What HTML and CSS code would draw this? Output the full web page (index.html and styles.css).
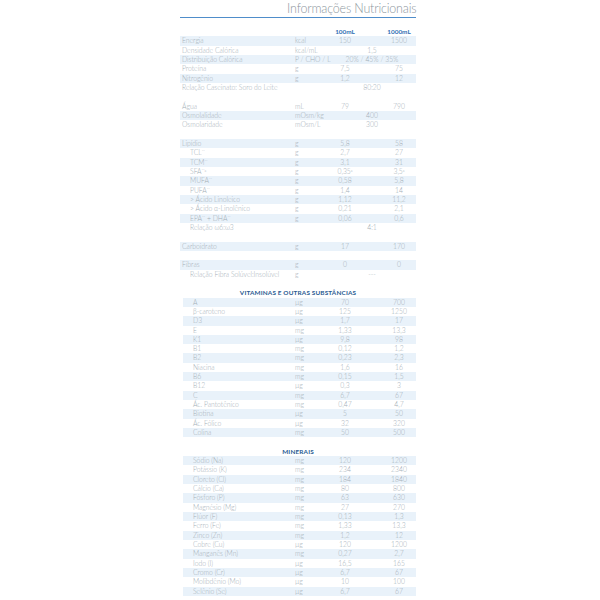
FILE: index.html
```html
<!DOCTYPE html>
<html lang="pt">
<head>
<meta charset="utf-8">
<title>Informações Nutricionais</title>
<link rel="stylesheet" href="styles.css">
</head>
<body>
<div class="page">
  <div class="title-wrap"><h1 class="title">Informações Nutricionais</h1></div>
  <div class="rule"></div>
  <div class="tbl">
    <div class="row head"><span></span><span></span><span class="v1">100mL</span><span class="v2">1000mL</span></div>

    <div class="row s"><span class="lb">Energia</span><span class="u">kcal</span><span class="v1">150</span><span class="v2">1500</span></div>
    <div class="row"><span class="lb">Densidade Calórica</span><span class="u">kcal/mL</span><span class="m">1,5</span></div>
    <div class="row s"><span class="lb">Distribuição Calórica</span><span class="u">P / CHO / L</span><span class="m">20% / 45% / 35%</span></div>
    <div class="row"><span class="lb">Proteína</span><span class="u">g</span><span class="v1">7,5</span><span class="v2">75</span></div>
    <div class="row s"><span class="lb">Nitrogênio</span><span class="u">g</span><span class="v1">1,2</span><span class="v2">12</span></div>
    <div class="row"><span class="lb">Relação Caseinato: Soro do Leite</span><span class="u"></span><span class="m">80:20</span></div>
    <div class="row"></div>
    <div class="row"><span class="lb">Água</span><span class="u">mL</span><span class="v1">79</span><span class="v2">790</span></div>
    <div class="row s"><span class="lb">Osmolalidade</span><span class="u">mOsm/kg</span><span class="m">400</span></div>
    <div class="row"><span class="lb">Osmolaridade</span><span class="u">mOsm/L</span><span class="m">300</span></div>
    <div class="row"></div>
    <div class="row s"><span class="lb">Lipídio</span><span class="u">g</span><span class="v1">5,8</span><span class="v2">58</span></div>
    <div class="row"><span class="lb sub">TCL<sup>**</sup></span><span class="u">g</span><span class="v1">2,7</span><span class="v2">27</span></div>
    <div class="row s"><span class="lb sub">TCM<sup>**</sup></span><span class="u">g</span><span class="v1">3,1</span><span class="v2">31</span></div>
    <div class="row"><span class="lb sub">SFA<sup>**a</sup></span><span class="u">g</span><span class="v1">0,35<sup>a</sup></span><span class="v2">3,5<sup>a</sup></span></div>
    <div class="row s"><span class="lb sub">MUFA<sup>**</sup></span><span class="u">g</span><span class="v1">0,58</span><span class="v2">5,8</span></div>
    <div class="row"><span class="lb sub">PUFA<sup>**</sup></span><span class="u">g</span><span class="v1">1,4</span><span class="v2">14</span></div>
    <div class="row s"><span class="lb sub">&gt; Ácido Linoleico</span><span class="u">g</span><span class="v1">1,12</span><span class="v2">11,2</span></div>
    <div class="row"><span class="lb sub">&gt; Ácido α-Linolênico</span><span class="u">g</span><span class="v1">0,21</span><span class="v2">2,1</span></div>
    <div class="row s"><span class="lb sub">EPA<sup>**</sup> + DHA<sup>**</sup></span><span class="u">g</span><span class="v1">0,06</span><span class="v2">0,6</span></div>
    <div class="row"><span class="lb sub">Relação ω6:ω3</span><span class="u"></span><span class="m">4:1</span></div>
    <div class="row"></div>
    <div class="row s"><span class="lb">Carboidrato</span><span class="u">g</span><span class="v1">17</span><span class="v2">170</span></div>
    <div class="row"></div>
    <div class="row s"><span class="lb">Fibras</span><span class="u">g</span><span class="v1">0</span><span class="v2">0</span></div>
    <div class="row"><span class="lb sub">Relação Fibra Solúvel:Insolúvel</span><span class="u">g</span><span class="m">---</span></div>
    <div class="row"></div>

    <div class="row sec"><span class="sec-t">VITAMINAS E OUTRAS SUBSTÂNCIAS</span></div>
    <div class="row in s"><span class="lb">A</span><span class="u">µg</span><span class="v1">70</span><span class="v2">700</span></div>
    <div class="row in"><span class="lb">β-caroteno</span><span class="u">µg</span><span class="v1">125</span><span class="v2">1250</span></div>
    <div class="row in s"><span class="lb">D3</span><span class="u">µg</span><span class="v1">1,7</span><span class="v2">17</span></div>
    <div class="row in"><span class="lb">E</span><span class="u">mg</span><span class="v1">1,33</span><span class="v2">13,3</span></div>
    <div class="row in s"><span class="lb">K1</span><span class="u">µg</span><span class="v1">9,8</span><span class="v2">98</span></div>
    <div class="row in"><span class="lb">B1</span><span class="u">mg</span><span class="v1">0,12</span><span class="v2">1,2</span></div>
    <div class="row in s"><span class="lb">B2</span><span class="u">mg</span><span class="v1">0,23</span><span class="v2">2,3</span></div>
    <div class="row in"><span class="lb">Niacina</span><span class="u">mg</span><span class="v1">1,6</span><span class="v2">16</span></div>
    <div class="row in s"><span class="lb">B6</span><span class="u">mg</span><span class="v1">0,15</span><span class="v2">1,5</span></div>
    <div class="row in"><span class="lb">B12</span><span class="u">µg</span><span class="v1">0,3</span><span class="v2">3</span></div>
    <div class="row in s"><span class="lb">C</span><span class="u">mg</span><span class="v1">6,7</span><span class="v2">67</span></div>
    <div class="row in"><span class="lb">Ác. Pantotênico</span><span class="u">mg</span><span class="v1">0,47</span><span class="v2">4,7</span></div>
    <div class="row in s"><span class="lb">Biotina</span><span class="u">µg</span><span class="v1">5</span><span class="v2">50</span></div>
    <div class="row in"><span class="lb">Ác. Fólico</span><span class="u">µg</span><span class="v1">32</span><span class="v2">320</span></div>
    <div class="row in s"><span class="lb">Colina</span><span class="u">mg</span><span class="v1">50</span><span class="v2">500</span></div>
    <div class="row"></div>

    <div class="row sec"><span class="sec-t">MINERAIS</span></div>
    <div class="row in s"><span class="lb">Sódio (Na)</span><span class="u">mg</span><span class="v1">120</span><span class="v2">1200</span></div>
    <div class="row in"><span class="lb">Potássio (K)</span><span class="u">mg</span><span class="v1">234</span><span class="v2">2340</span></div>
    <div class="row in s"><span class="lb">Cloreto (Cl)</span><span class="u">mg</span><span class="v1">184</span><span class="v2">1840</span></div>
    <div class="row in"><span class="lb">Cálcio (Ca)</span><span class="u">mg</span><span class="v1">80</span><span class="v2">800</span></div>
    <div class="row in s"><span class="lb">Fósforo (P)</span><span class="u">mg</span><span class="v1">63</span><span class="v2">630</span></div>
    <div class="row in"><span class="lb">Magnésio (Mg)</span><span class="u">mg</span><span class="v1">27</span><span class="v2">270</span></div>
    <div class="row in s"><span class="lb">Flúor (F)</span><span class="u">mg</span><span class="v1">0,13</span><span class="v2">1,3</span></div>
    <div class="row in"><span class="lb">Ferro (Fe)</span><span class="u">mg</span><span class="v1">1,33</span><span class="v2">13,3</span></div>
    <div class="row in s"><span class="lb">Zinco (Zn)</span><span class="u">mg</span><span class="v1">1,2</span><span class="v2">12</span></div>
    <div class="row in"><span class="lb">Cobre (Cu)</span><span class="u">µg</span><span class="v1">120</span><span class="v2">1200</span></div>
    <div class="row in s"><span class="lb">Manganês (Mn)</span><span class="u">mg</span><span class="v1">0,27</span><span class="v2">2,7</span></div>
    <div class="row in"><span class="lb">Iodo (I)</span><span class="u">µg</span><span class="v1">16,5</span><span class="v2">165</span></div>
    <div class="row in s"><span class="lb">Cromo (Cr)</span><span class="u">µg</span><span class="v1">6,7</span><span class="v2">67</span></div>
    <div class="row in"><span class="lb">Molibdênio (Mo)</span><span class="u">µg</span><span class="v1">10</span><span class="v2">100</span></div>
    <div class="row in s"><span class="lb">Selênio (Se)</span><span class="u">µg</span><span class="v1">6,7</span><span class="v2">67</span></div>
  </div>
</div>
</body>
</html>
```

FILE: styles.css
```css
html, body {
  margin: 0;
  padding: 0;
  background: #ffffff;
}

.page {
  width: 236px;
  margin-left: 180px;
  font-family: "Lato", "Open Sans", "Liberation Sans", sans-serif;
}

.title-wrap {
  display: flex;
  justify-content: flex-end;
  align-items: flex-start;
  height: 17px;
}

.title {
  margin: 0;
  font-size: 14.5px;
  line-height: 15px;
  font-weight: 300;
  color: #8e979e;
  white-space: nowrap;
  letter-spacing: -0.2px;
  transform: scaleX(0.86);
  transform-origin: right top;
}

.rule {
  height: 0;
  border-top: 1.5px solid #4f8dca;
  margin-bottom: 9px;
}

.tbl {
  font-size: 6.8px;
  color: #a3aeb6;
  font-weight: 300;
}

.row {
  display: grid;
  grid-template-columns: 115px 23px 54px 44px;
  height: 9.34px;
  line-height: 9.34px;
  white-space: nowrap;
}

.row.s {
  background: #e9f2fa;
}

.row.in {
  margin-left: 3px;
  grid-template-columns: 112px 23px 54px 44px;
}

.lb {
  padding-left: 2px;
}

.lb.sub,
.row.in .lb {
  padding-left: 10px;
}

.v1 {
  text-align: center;
}

.v2 {
  text-align: center;
  padding-left: 10px;
}

.m {
  grid-column: 3 / 5;
  text-align: center;
  padding-left: 10px;
}

sup {
  font-size: 3.6px;
  line-height: 0;
  vertical-align: 2.5px;
}

.head {
  font-size: 6.4px;
}

.head .v1,
.head .v2 {
  font-weight: 700;
  color: #2f6fb3;
}

.sec {
  display: flex;
  justify-content: center;
  font-size: 6.4px;
}

.sec-t {
  font-weight: 700;
  color: #2a5c92;
  letter-spacing: 0.15px;
}
```
